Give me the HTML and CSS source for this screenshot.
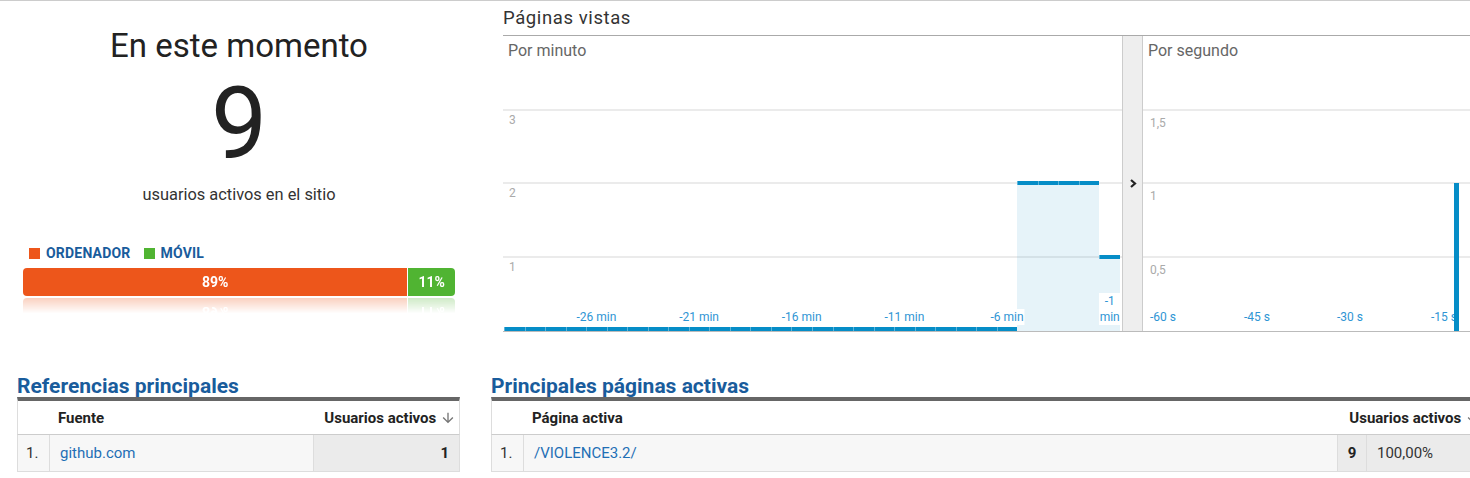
FILE: index.html
```html
<!DOCTYPE html>
<html lang="es">
<head>
<meta charset="utf-8">
<title>Tiempo real - Visión general</title>
<link rel="stylesheet" href="styles.css">
</head>
<body>
<div class="page">
  <div class="top">
    <section class="now">
      <h1 class="now-title">En este momento</h1>
      <div class="now-count">9</div>
      <div class="now-sub">usuarios activos en el sitio</div>
      <div class="legend">
        <span class="legend-item"><i class="swatch swatch-desktop"></i>ORDENADOR</span>
        <span class="legend-item"><i class="swatch swatch-mobile"></i>MÓVIL</span>
      </div>
      <div class="devbar">
        <div class="seg seg-desktop" style="width:89%">89%</div>
        <div class="seg seg-mobile">11%</div>
      </div>
    </section>

    <section class="views">
      <h2 class="views-title">Páginas vistas</h2>
      <div class="charts">
        <div class="chart chart-min">
          <div class="chart-title">Por minuto</div>
          <div class="gridline g3"><span>3</span></div>
          <div class="gridline g2"><span>2</span></div>
          <div class="gridline g1"><span>1</span></div>
          <div class="bars">
            <div class="bar"></div><div class="bar"></div><div class="bar"></div><div class="bar"></div><div class="bar"></div>
            <div class="bar"></div><div class="bar"></div><div class="bar"></div><div class="bar"></div><div class="bar"></div>
            <div class="bar"></div><div class="bar"></div><div class="bar"></div><div class="bar"></div><div class="bar"></div>
            <div class="bar"></div><div class="bar"></div><div class="bar"></div><div class="bar"></div><div class="bar"></div>
            <div class="bar"></div><div class="bar"></div><div class="bar"></div><div class="bar"></div><div class="bar"></div>
            <div class="bar val" style="height:150px"></div>
            <div class="bar val" style="height:150px"></div>
            <div class="bar val" style="height:150px"></div>
            <div class="bar val" style="height:150px"></div>
            <div class="bar val" style="height:76px"></div>
          </div>
          <div class="xaxis">
            <span class="xlabel" style="left:15%">-26 min</span>
            <span class="xlabel" style="left:31.667%">-21 min</span>
            <span class="xlabel" style="left:48.333%">-16 min</span>
            <span class="xlabel" style="left:65%">-11 min</span>
            <span class="xlabel" style="left:81.667%">-6 min</span>
            <span class="xlabel" style="left:98.333%">-1<br>min</span>
          </div>
        </div>

        <div class="divider">
          <svg class="chevron" width="8" height="9" viewBox="0 0 8 9"><polyline points="2,1 6,4.5 2,8" fill="none" stroke="#222" stroke-width="2.2"/></svg>
        </div>

        <div class="chart chart-sec">
          <div class="chart-title">Por segundo</div>
          <div class="gridline g3"><span>1,5</span></div>
          <div class="gridline g2"><span>1</span></div>
          <div class="gridline g1"><span>0,5</span></div>
          <span class="xlabel" style="left:20px">-60 s</span>
          <span class="xlabel" style="left:114px">-45 s</span>
          <span class="xlabel" style="left:207px">-30 s</span>
          <span class="xlabel" style="left:301px">-15 s</span>
          <div class="sec-bar" style="left:311px;height:148px"></div>
        </div>
      </div>
    </section>
  </div>

  <div class="bottom">
    <section class="panel panel-refs">
      <h3 class="panel-title">Referencias principales</h3>
      <table class="rt">
        <colgroup><col class="col-idx"><col class="col-name-refs"><col class="col-val-refs"></colgroup>
        <thead>
          <tr>
            <th class="c-idx"></th>
            <th class="c-name">Fuente</th>
            <th class="c-head-val">Usuarios activos <svg class="sort" width="16" height="16" viewBox="0 0 24 24"><path d="M20 12l-1.41-1.41L13 16.17V4h-2v12.17l-5.58-5.59L4 12l8 8 8-8z" fill="#757575"/></svg></th>
          </tr>
        </thead>
        <tbody>
          <tr>
            <td class="c-idx">1.</td>
            <td class="c-name"><a class="link">github.com</a></td>
            <td class="c-val c-num-right">1</td>
          </tr>
        </tbody>
      </table>
    </section>

    <section class="panel panel-pages">
      <h3 class="panel-title">Principales páginas activas</h3>
      <table class="rt">
        <colgroup><col class="col-idx"><col class="col-name-pages"><col class="col-num"><col class="col-pct"></colgroup>
        <thead>
          <tr>
            <th class="c-idx"></th>
            <th class="c-name">Página activa</th>
            <th class="c-head-val" colspan="2">Usuarios activos <svg class="sort" width="16" height="16" viewBox="0 0 24 24"><path d="M20 12l-1.41-1.41L13 16.17V4h-2v12.17l-5.58-5.59L4 12l8 8 8-8z" fill="#757575"/></svg></th>
          </tr>
        </thead>
        <tbody>
          <tr>
            <td class="c-idx">1.</td>
            <td class="c-name"><a class="link">/VIOLENCE3.2/</a></td>
            <td class="c-val c-num">9</td>
            <td class="c-val c-pct">100,00%</td>
          </tr>
        </tbody>
      </table>
    </section>
  </div>
</div>
</body>
</html>
```

FILE: styles.css
```css
* { box-sizing: border-box; }
html, body { margin: 0; padding: 0; background: #fff; overflow: hidden; }
body {
  font-family: Roboto, "Liberation Sans", Arial, sans-serif;
  color: #222;
  width: 1470px;
  height: 478px;
}
.page { width: 1470px; border-top: 1px solid #ccc; }

/* ---------- top ---------- */
.top { display: flex; }

.now {
  flex: none;
  width: 478px;
  padding: 0 23px;
  text-align: center;
}
.now-title {
  margin: 26px 0 0;
  font-size: 33px;
  font-weight: 400;
  line-height: 38px;
  color: #222;
}
.now-count {
  margin-top: 9px;
  font-size: 100px;
  line-height: 100px;
  color: #222;
}
.now-sub {
  margin-top: 11px;
  font-size: 16.4px;
  line-height: 20px;
  color: #333;
}
.legend {
  margin-top: 40px;
  padding-left: 6px;
  display: flex;
  gap: 13px;
  font-size: 14px;
  font-weight: 700;
  line-height: 16px;
  letter-spacing: 0.2px;
  color: #195c9c;
}
.legend-item { display: flex; align-items: center; gap: 6px; }
.swatch { display: block; width: 11px; height: 11px; }
.swatch-desktop { background: #ed561b; }
.swatch-mobile { background: #50b432; }

.devbar {
  margin-top: 7px;
  height: 28px;
  display: flex;
  border-radius: 4px;
  overflow: hidden;
  -webkit-box-reflect: below 2px linear-gradient(transparent 45%, rgba(0, 0, 0, 0.28));
}
.seg {
  color: #fff;
  font-size: 14px;
  font-weight: 700;
  line-height: 28px;
  text-align: center;
}
.seg-desktop { background: #ed561b; }
.seg-mobile { flex: 1; background: #50b432; border-left: 1px solid #fff; }

/* ---------- page views ---------- */
.views { flex: 1; min-width: 0; margin-left: 25px; }
.views-title {
  margin: 0;
  height: 35px;
  padding-top: 1px;
  font-size: 18.5px;
  font-weight: 400;
  line-height: 33px;
  letter-spacing: 0.6px;
  color: #333;
  border-bottom: 1px solid #aaa;
}
.charts {
  display: flex;
  height: 296px;
  border-bottom: 1px solid #bbb;
}
.chart { position: relative; height: 100%; overflow: hidden; }
.chart-min { flex: none; width: 619px; }
.chart-sec { flex: 1; }

.chart-title {
  position: absolute;
  top: 6px;
  left: 5px;
  font-size: 16px;
  line-height: 18px;
  color: #666;
}
.gridline {
  position: absolute;
  left: 0;
  right: 0;
  height: 2px;
  background: #ebebeb;
}
.g1 { bottom: 73px; }
.g2 { bottom: 147px; }
.g3 { bottom: 220px; }
.gridline span {
  position: absolute;
  left: 6px;
  top: 5px;
  font-size: 12px;
  line-height: 12px;
  color: #aaa;
}
.chart-sec .gridline span { left: 7px; top: 8px; }

.bars {
  position: absolute;
  left: 1px;
  right: 2px;
  bottom: 0;
  display: flex;
  align-items: flex-end;
}
.xaxis {
  position: absolute;
  left: 1px;
  right: 2px;
  bottom: 0;
  height: 40px;
}
.bar { flex: 1; height: 4px; position: relative; }
.bar::before {
  content: "";
  position: absolute;
  top: 0;
  left: 0;
  right: 0;
  height: 4px;
  background: #058dc7;
  box-shadow: inset 1px 0 0 rgba(255, 255, 255, 0.35);
}
.bar.val { background: rgba(5, 141, 199, 0.1); }

.xlabel {
  position: absolute;
  bottom: 6px;
  transform: translateX(-50%);
  padding: 0 1px;
  font-size: 12px;
  line-height: 16px;
  color: #2f95d4;
  background: #fff;
  white-space: nowrap;
  text-align: center;
  z-index: 1;
}
.sec-bar {
  position: absolute;
  bottom: 0;
  width: 5px;
  background: #058dc7;
  z-index: 2;
}

.divider {
  flex: none;
  width: 21px;
  background: #eee;
  border-left: 1px solid #ccc;
  border-right: 1px solid #ccc;
  display: flex;
  justify-content: center;
  align-items: flex-start;
  padding-top: 143px;
}
.chevron { display: block; }

/* ---------- bottom tables ---------- */
.bottom {
  display: flex;
  gap: 31px;
  padding-left: 17px;
  margin-top: 43px;
}
.panel { flex: none; }
.panel-refs { width: 443px; }
.panel-pages { width: 994px; }
.panel-title {
  margin: 0;
  font-size: 21px;
  font-weight: 700;
  line-height: 22px;
  color: #195c9c;
}
.rt {
  width: 100%;
  table-layout: fixed;
  border-collapse: separate;
  border-spacing: 0;
  font-size: 15px;
}
.col-idx { width: 33px; }
.col-name-refs { width: 263px; }
.col-val-refs { width: 147px; }
.col-name-pages { width: 813px; }
.col-num { width: 29px; }
.col-pct { width: 119px; }

.rt th {
  height: 38px;
  padding: 0 8px;
  border-top: 4px solid #666;
  border-bottom: 1px solid #ccc;
  text-align: left;
  font-weight: 700;
  color: #222;
  white-space: nowrap;
  background: #fff;
}
.rt th:first-child { border-left: 1px solid #ddd; }
.rt th:last-child { border-right: 1px solid #ddd; }
.rt th.c-head-val { text-align: right; padding-right: 3px; }
.sort { vertical-align: -3px; }

.rt td {
  height: 37px;
  padding: 0 10px;
  background: #f7f7f7;
  border-bottom: 1px solid #ddd;
  color: #333;
  white-space: nowrap;
}
.rt td.c-idx { padding-left: 8px; border-left: 1px solid #ddd; border-right: 1px solid #ddd; }
.rt td:last-child { border-right: 1px solid #ddd; }
.rt td.c-val { background: #ebebeb; border-left: 1px solid #ddd; }
.rt td.c-num-right { text-align: right; font-weight: 700; color: #222; padding-right: 10px; }
.rt td.c-num { text-align: center; font-weight: 700; color: #222; padding: 0; }
.rt td.c-pct { padding-left: 10px; }
.link { color: #1f6fb5; text-decoration: none; }
```
